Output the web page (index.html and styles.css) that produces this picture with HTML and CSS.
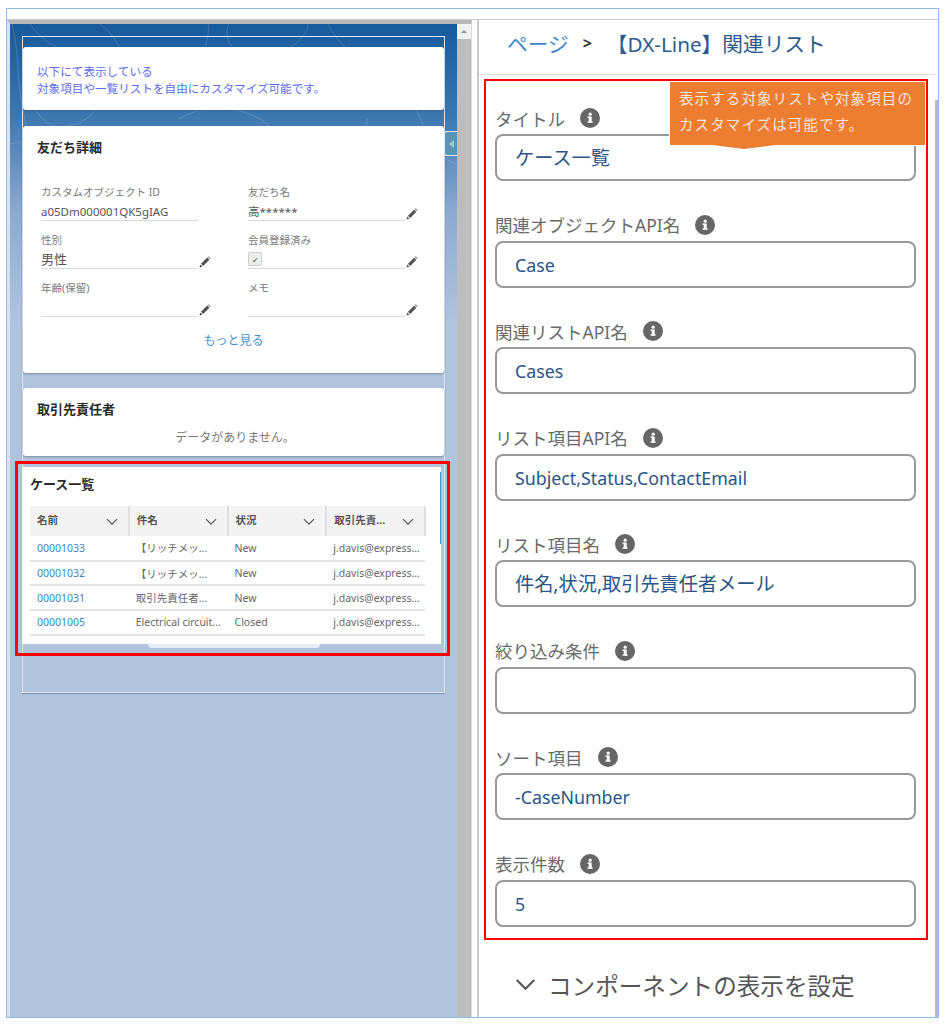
FILE: index.html
```html
<!DOCTYPE html>
<html lang="ja">
<head>
  <meta charset="UTF-8" />
  <title>関連リスト</title>
  <link rel="stylesheet" href="styles.css">
</head>
<body>
  <svg class="defs" width="0" height="0">
    <symbol id="info" viewBox="0 0 20 20">
      <circle cx="10" cy="10" r="10" fill="#666"/>
      <rect x="8.7" y="8.5" width="3" height="6" fill="#fff"/>
      <rect x="7.5" y="8.5" width="2" height="1.3" fill="#fff"/>
      <rect x="7.5" y="13.4" width="5.2" height="1.3" fill="#fff"/>
      <circle cx="10.2" cy="6.2" r="1.6" fill="#fff"/>
    </symbol>
    <symbol id="pencil" viewBox="0 0 12 12">
      <path d="M0.5 11.5l0.8-3 2.2 2.2zM2 7.8L8.2 1.6l2.2 2.2L4.2 10zM8.9 0.9l0.7-0.5 2 2-0.5 0.7z" fill="#555"/>
    </symbol>
    <symbol id="chevron" viewBox="0 0 12 8">
      <path d="M1 1.2l5 5 5-5" fill="none" stroke="#555" stroke-width="1.2"/>
    </symbol>
  </svg>

  <div class="frame">
    <div class="topbar"></div>
    <div class="panes">

      <div class="left-pane">
        <svg class="texture" viewBox="0 0 450 200" preserveAspectRatio="none">
          <g fill="none" stroke="#fff" stroke-opacity="0.16" stroke-width="1">
            <path d="M2 0c8 30 4 60 12 90s-6 60 2 100"/>
            <path d="M20 0c20 30 60 30 70 60s-30 50-50 40-30-50 0-60"/>
            <path d="M90 0c30 20 20 50 50 60s60-20 60-60"/>
            <path d="M220 0c-10 30 30 40 50 30s30-20 30-30"/>
            <path d="M320 0c20 40 60 40 80 70s20 60 50 70"/>
            <path d="M0 120c40-10 60 20 30 50"/>
            <path d="M170 95c30-20 90-10 100 20"/>
            <path d="M360 95c-10 20 30 40 60 30"/>
          </g>
        </svg>
        <div class="inner-frame">
          <div class="card card-note">
            <p>以下にて表示している</p>
            <p>対象項目や一覧リストを自由にカスタマイズ可能です。</p>
          </div>

          <div class="card card-detail">
            <h3>友だち詳細</h3>
            <div class="detail-grid">
              <div class="detail">
                <span class="detail-label">カスタムオブジェクト ID</span>
                <div class="detail-value">a05Dm000001QK5gIAG</div>
              </div>
              <div class="detail editable">
                <span class="detail-label">友だち名</span>
                <div class="detail-value">高******</div>
                <svg class="pencil"><use href="#pencil"/></svg>
              </div>
              <div class="detail editable">
                <span class="detail-label">性別</span>
                <div class="detail-value big">男性</div>
                <svg class="pencil"><use href="#pencil"/></svg>
              </div>
              <div class="detail editable">
                <span class="detail-label">会員登録済み</span>
                <div class="detail-value"><span class="check">✔</span></div>
                <svg class="pencil"><use href="#pencil"/></svg>
              </div>
              <div class="detail editable">
                <span class="detail-label">年齢(保留)</span>
                <div class="detail-value"></div>
                <svg class="pencil"><use href="#pencil"/></svg>
              </div>
              <div class="detail editable">
                <span class="detail-label">メモ</span>
                <div class="detail-value"></div>
                <svg class="pencil"><use href="#pencil"/></svg>
              </div>
            </div>
            <div class="more">もっと見る</div>
          </div>

          <div class="card card-contact">
            <h3>取引先責任者</h3>
            <div class="no-data">データがありません。</div>
          </div>

          <div class="red-box red-left">
            <div class="case-card">
              <h3>ケース一覧</h3>
              <table class="case-table">
                <thead>
                  <tr>
                    <th>名前<svg class="th-arrow"><use href="#chevron"/></svg></th>
                    <th>件名<svg class="th-arrow"><use href="#chevron"/></svg></th>
                    <th>状況<svg class="th-arrow"><use href="#chevron"/></svg></th>
                    <th>取引先責...<svg class="th-arrow"><use href="#chevron"/></svg></th>
                  </tr>
                </thead>
                <tbody>
                  <tr><td class="link">00001033</td><td>【リッチメッ...</td><td>New</td><td>j.davis@express...</td></tr>
                  <tr><td class="link">00001032</td><td>【リッチメッ...</td><td>New</td><td>j.davis@express...</td></tr>
                  <tr><td class="link">00001031</td><td>取引先責任者...</td><td>New</td><td>j.davis@express...</td></tr>
                  <tr><td class="link">00001005</td><td>Electrical circuit...</td><td>Closed</td><td>j.davis@express...</td></tr>
                </tbody>
              </table>
            </div>
          </div>
        </div>
        <div class="side-tab"><span></span></div>
      </div>

      <div class="left-scroll"><div class="scroll-btn"><span></span></div></div>

      <div class="right-pane">
        <div class="right-content">
          <div class="breadcrumb">
            <span class="crumb-link">ページ</span>
            <span class="crumb-sep">&gt;</span>
            <span class="crumb-title">【DX-Line】関連リスト</span>
          </div>

          <div class="red-box red-right">
            <div class="callout">
              <p>表示する対象リストや対象項目の</p>
              <p>カスタマイズは可能です。</p>
            </div>

            <div class="field">
              <div class="field-label">タイトル<svg class="info"><use href="#info"/></svg></div>
              <div class="field-input jp">ケース一覧</div>
            </div>
            <div class="field">
              <div class="field-label">関連オブジェクトAPI名<svg class="info"><use href="#info"/></svg></div>
              <div class="field-input">Case</div>
            </div>
            <div class="field">
              <div class="field-label">関連リストAPI名<svg class="info"><use href="#info"/></svg></div>
              <div class="field-input">Cases</div>
            </div>
            <div class="field">
              <div class="field-label">リスト項目API名<svg class="info"><use href="#info"/></svg></div>
              <div class="field-input">Subject,Status,ContactEmail</div>
            </div>
            <div class="field">
              <div class="field-label">リスト項目名<svg class="info"><use href="#info"/></svg></div>
              <div class="field-input jp">件名,状況,取引先責任者メール</div>
            </div>
            <div class="field">
              <div class="field-label">絞り込み条件<svg class="info"><use href="#info"/></svg></div>
              <div class="field-input"></div>
            </div>
            <div class="field">
              <div class="field-label">ソート項目<svg class="info"><use href="#info"/></svg></div>
              <div class="field-input">-CaseNumber</div>
            </div>
            <div class="field">
              <div class="field-label">表示件数<svg class="info"><use href="#info"/></svg></div>
              <div class="field-input">5</div>
            </div>
          </div>

          <div class="section-toggle">
            <svg class="toggle-arrow"><use href="#chevron"/></svg>
            <span>コンポーネントの表示を設定</span>
          </div>
        </div>
        <div class="right-scroll"></div>
      </div>

    </div>
  </div>
</body>
</html>
```

FILE: styles.css
```css
* {
  box-sizing: border-box;
}
body {
  margin: 0;
  background: #fff;
  font-family: "Noto Sans", "Noto Sans CJK JP", sans-serif;
}
p, h3 {
  margin: 0;
}
.defs {
  position: absolute;
}
.frame {
  width: 933px;
  height: 1010px;
  margin: 8px 0 0 6px;
  border: 1px solid #8dbbe6;
  display: flex;
  flex-direction: column;
}
.topbar {
  height: 11px;
  flex: none;
  background: #fff;
  border-bottom: 1px solid #ccc;
}
.panes {
  flex: 1;
  display: flex;
  min-height: 0;
}

/* left */
.left-pane {
  position: relative;
  width: 450px;
  flex: none;
  background: linear-gradient(#175a9c 0, #3b76b0 90px, #8fabd0 190px, #b0c4de 300px);
  border-top: 4px solid #b8b8b8;
  border-left: 3px solid #d5e3f3;
  padding: 12px 0 0 12px;
}
.texture {
  position: absolute;
  top: 0;
  left: 0;
  width: 100%;
  height: 200px;
}
.inner-frame {
  position: relative;
  width: 423px;
  height: 657px;
  border: 1px solid #dfe8f3;
  box-shadow: 0 1px 1px rgba(60, 80, 120, 0.4);
  padding-top: 10px;
}
.card {
  background: #fff;
  border-radius: 3px;
  box-shadow: 0 1px 2px rgba(60, 70, 90, 0.45);
}
.card h3 {
  font-size: 13px;
  font-weight: 700;
  color: #2b2b2b;
  line-height: 18px;
}
.card-note {
  height: 63px;
  padding: 16px 14px 0;
  font-size: 11.6px;
  line-height: 17px;
  color: #5b6cf2;
}
.card-detail {
  height: 247px;
  margin-top: 16px;
  padding: 12px 14px 0;
}
.detail-grid {
  display: grid;
  grid-template-columns: 157px 157px;
  column-gap: 50px;
  margin: 29px 0 0 4px;
}
.detail {
  position: relative;
  height: 48px;
}
.detail-label {
  display: block;
  font-size: 10.5px;
  line-height: 14px;
  color: #7a7a7a;
}
.detail-value {
  height: 19px;
  margin-top: 3px;
  font-size: 11.5px;
  line-height: 19px;
  color: #555;
  border-bottom: 1px solid #d8d8d8;
}
.detail-value.big {
  font-size: 13px;
}
.check {
  display: inline-block;
  width: 14px;
  height: 14px;
  margin-top: 2px;
  border: 1px solid #ccc;
  border-radius: 2px;
  background: #eee;
  font-size: 8px;
  line-height: 13px;
  text-align: center;
  color: #888;
  vertical-align: top;
}
.pencil {
  position: absolute;
  right: -13px;
  top: 23px;
  width: 12px;
  height: 12px;
}
.more {
  margin-top: 3px;
  text-align: center;
  font-size: 12px;
  line-height: 18px;
  color: #4a8fd0;
}
.card-contact {
  height: 68px;
  margin-top: 15px;
  padding: 12px 14px 0;
}
.no-data {
  margin: 11px 0 0 3px;
  text-align: center;
  font-size: 12px;
  line-height: 18px;
  color: #777;
}
.red-box {
  border: 3px solid #f00;
}
.red-left {
  width: 435px;
  height: 195px;
  margin: 5px 0 0 -8px;
  padding: 3px 0 0 4px;
}
.case-card {
  position: relative;
  width: 419px;
  height: 177px;
  background: #fff;
  padding: 8px 8px 0;
}
.case-card::before {
  content: "";
  position: absolute;
  top: 5px;
  right: 0;
  width: 1px;
  height: 72px;
  background: #4a90d0;
}
.case-card::after {
  content: "";
  position: absolute;
  left: 126px;
  bottom: -4px;
  width: 172px;
  height: 4px;
  background: #e6edf6;
  border-radius: 0 0 8px 8px;
}
.case-card h3 {
  font-size: 13px;
  font-weight: 700;
  line-height: 18px;
  color: #2b2b2b;
}
.case-table {
  width: 396px;
  margin-top: 13px;
  border-collapse: collapse;
  table-layout: fixed;
  font-size: 10.5px;
  color: #666;
}
.case-table th {
  position: relative;
  height: 30px;
  padding: 0 0 4px 7px;
  background: #f3f3f3;
  border-right: 2px solid #ddd;
  text-align: left;
  font-size: 10.5px;
  font-weight: 700;
  color: #555;
}
.th-arrow {
  position: absolute;
  right: 10px;
  top: 12px;
  width: 12px;
  height: 8px;
}
.case-table td {
  height: 24.7px;
  padding: 0 0 0 7px;
  border-bottom: 2px solid #e4e4e4;
  white-space: nowrap;
  overflow: hidden;
}
.case-table td.link {
  color: #3f85c6;
}
.side-tab {
  position: absolute;
  top: 107px;
  right: 0;
  width: 13px;
  height: 25px;
  background: #5b93b5;
  border: 1px solid #dfe8f3;
  border-right: none;
  border-radius: 3px 0 0 3px;
  display: flex;
  align-items: center;
  justify-content: center;
}
.side-tab span {
  border: 4px solid transparent;
  border-right: 5px solid #a9c5d8;
  border-left: none;
}
.left-scroll {
  width: 15px;
  flex: none;
  background: #bdbdbd;
  border-top: 4px solid #b8b8b8;
  border-right: 1px solid #ddd;
}
.scroll-btn {
  display: flex;
  justify-content: center;
  padding-top: 6px;
  height: 15px;
  background: #f2f2f2;
}
.scroll-btn span {
  width: 0;
  height: 0;
  border: 3px solid transparent;
  border-top: none;
  border-bottom: 3px solid #999;
}

/* right */
.right-pane {
  flex: 1;
  margin-left: 5px;
  display: flex;
  border-left: 2px solid #c9c9c9;
}
.right-content {
  flex: 1;
}
.right-scroll {
  width: 3px;
  margin-top: 80px;
  background: #bbb;
}
.breadcrumb {
  height: 55px;
  padding: 0 0 9px 28px;
  border-bottom: 1px solid #ddd;
  display: flex;
  align-items: center;
  font-size: 20.7px;
  color: #2f5a8c;
}
.crumb-link {
  color: #3c87cb;
  font-size: 20.7px;
}
.crumb-sep {
  margin: 0 15px 0 14px;
  font-size: 16px;
  font-weight: 700;
  color: #333;
}
.red-right {
  position: relative;
  width: 444px;
  height: 861px;
  margin: 4px 0 0 5px;
  border-width: 2px;
  padding: 25px 0 0 9px;
}
.callout {
  position: absolute;
  top: 0;
  right: 0;
  width: 257px;
  height: 65px;
  background: #ed7d31;
  border: 1px solid #fff;
  padding: 3px 8px 0 9px;
  font-size: 14.5px;
  line-height: 26px;
  letter-spacing: 1.1px;
  color: #fbe5d6;
}
.callout::after {
  content: "";
  position: absolute;
  left: 42px;
  top: 63px;
  border-top: 4px solid #ed7d31;
  border-left: 32px solid transparent;
  border-right: 32px solid transparent;
}
.field {
  height: 106.5px;
}
.field-label {
  display: flex;
  align-items: center;
  height: 24px;
  font-size: 17.5px;
  color: #6a6a6a;
}
.info {
  width: 20px;
  height: 20px;
  margin-left: 15px;
}
.field-input {
  width: 421px;
  height: 47px;
  margin-top: 4px;
  padding: 0 0 0 18px;
  border: 2px solid #999;
  border-radius: 8px;
  font-size: 17.8px;
  line-height: 44px;
  color: #2b5585;
}
.field-input.jp {
  font-size: 19.2px;
}
.section-toggle {
  display: flex;
  align-items: center;
  margin-top: 25px;
  padding-left: 36px;
  height: 40px;
  font-size: 23.6px;
  color: #555;
}
.toggle-arrow {
  width: 21px;
  height: 14px;
  margin-right: 12px;
}
```
